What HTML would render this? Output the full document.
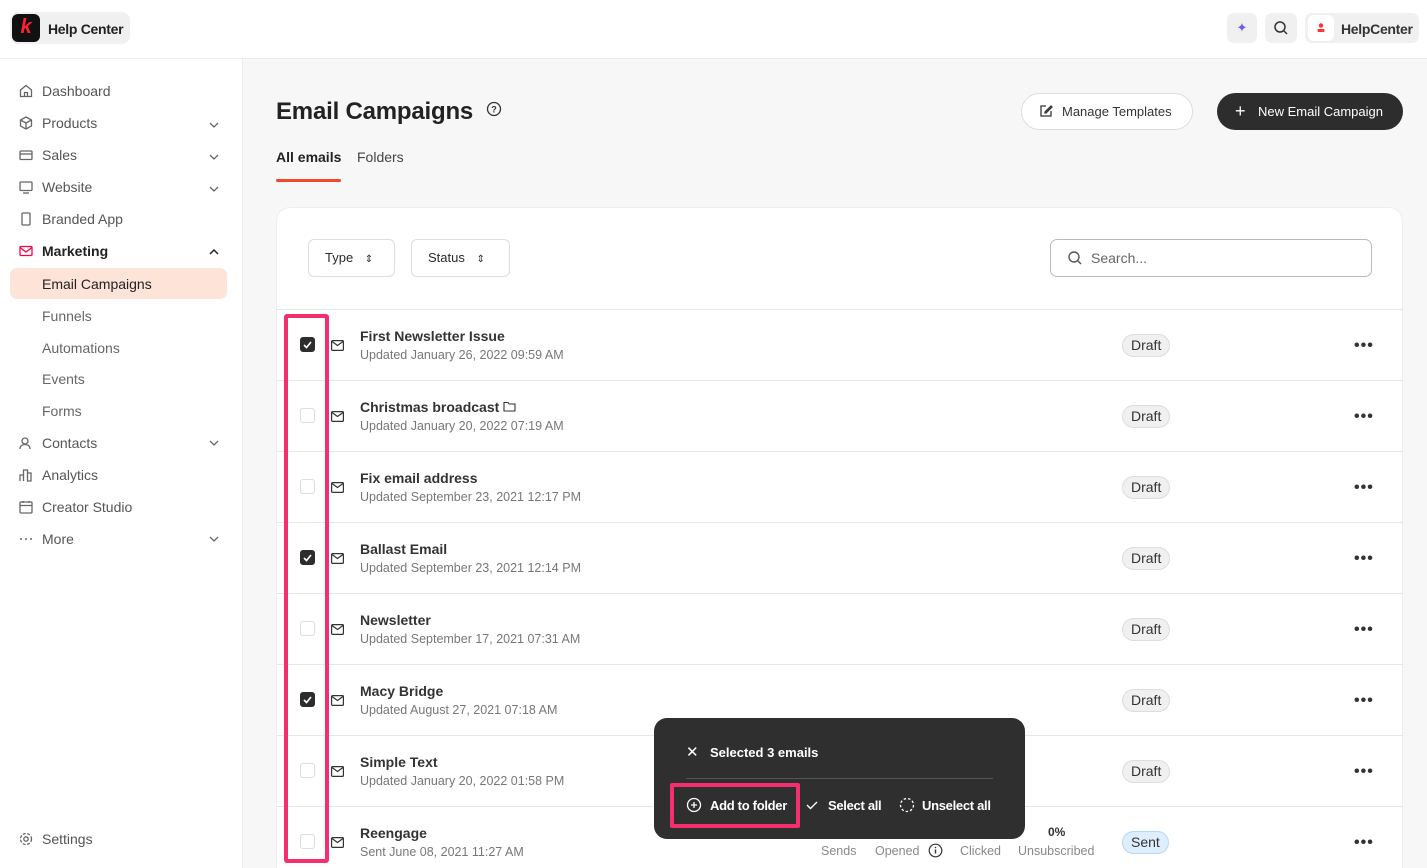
<!DOCTYPE html>
<html><head><meta charset="utf-8"><style>
*{box-sizing:border-box;margin:0;padding:0}
html{width:1427px;height:868px;overflow:hidden}
body{width:1427px;height:868px;overflow:hidden;font-family:"Liberation Sans",sans-serif;background:#f7f7f7;color:#2b2b2b;position:relative}
.top{position:absolute;left:0;top:0;width:1427px;height:59px;background:#fff;border-bottom:1px solid #ececec}
.side{position:absolute;left:0;top:59px;width:243px;height:809px;background:#fff;border-right:1px solid #ececec}
.nav{position:absolute;left:18px;font-size:14px;color:#555;display:flex;align-items:center;gap:8px}
.nav svg{width:16px;height:16px}
.chev{position:absolute;left:208px;width:12px;height:12px}
.sub{position:absolute;left:42px;font-size:14px;color:#666}
.abs{position:absolute}
.card{position:absolute;left:276px;top:207px;width:1127px;height:700px;background:#fff;border-radius:14px;border:1px solid #eee}
.row{position:absolute;left:276px;width:1127px;height:71px;border-top:1px solid #e6e6e6}
.t{position:absolute;left:84px;top:18px;font-size:14px;font-weight:bold;color:#333}
.d{position:absolute;left:84px;top:38px;font-size:12.5px;color:#777}
.cb{position:absolute;left:24px;top:27px;width:15px;height:15px;border:1px solid #ddd;border-radius:3px;background:#fff}
.cb.on{background:#2d2d2d;border-color:#2d2d2d}
.badge{position:absolute;left:846px;top:24px;height:23px;padding:0 8px;border:1px solid #ddd;border-radius:12px;background:#f0f0f0;font-size:14px;line-height:21px;color:#333}
.dots{position:absolute;left:1078px;top:27px;font-size:16px;font-weight:bold;letter-spacing:1px;color:#333}
.mail{position:absolute;left:55px;top:30px}
</style></head><body>
<div class="top">
 <div class="abs" style="left:10px;top:12px;width:120px;height:32px;background:#f0f0f0;border-radius:8px"></div>
 <div class="abs" style="left:12px;top:14px;width:28px;height:28px;background:#111;border-radius:6px;color:#f23;font-weight:bold;font-style:italic;font-size:20px;text-align:center;line-height:27px">k</div>
 <div class="abs" style="left:48px;top:21px;font-size:14px;font-weight:bold;color:#222;letter-spacing:-0.3px">Help Center</div>
 <div class="abs" style="left:1227px;top:13px;width:30px;height:30px;background:#f0f0f0;border-radius:7px;color:#6c5ce7;text-align:center;line-height:30px;font-size:13px">✦</div>
 <div class="abs" style="left:1265px;top:13px;width:32px;height:30px;background:#f0f0f0;border-radius:7px"><svg width="32" height="30"><circle cx="15" cy="14" r="5" fill="none" stroke="#333" stroke-width="1.5"/><path d="M19 18l3 3" stroke="#333" stroke-width="1.5"/></svg></div>
 <div class="abs" style="left:1305px;top:13px;width:114px;height:30px;background:#f0f0f0;border-radius:7px"></div>
 <div class="abs" style="left:1308px;top:15px;width:26px;height:26px;background:#fff;border-radius:6px"><svg width="26" height="26"><circle cx="13" cy="10.5" r="2.2" fill="#f33"/><rect x="9.5" y="14" width="7" height="3" rx="1" fill="#f33"/></svg></div>
 <div class="abs" style="left:1341px;top:21px;font-size:14px;font-weight:bold;color:#333;letter-spacing:-0.3px">HelpCenter</div>
</div>
<div class="side">
 <div class="nav" style="top:24px"><svg viewBox="0 0 16 16"><path d="M2.5 7L8 2.5 13.5 7v6.5h-11z M6.5 13.5v-4h3v4" fill="none" stroke="#666" stroke-width="1.3"/></svg>Dashboard</div>
 <div class="nav" style="top:56px"><svg viewBox="0 0 16 16"><path d="M8 2l5.5 3v6L8 14 2.5 11V5z M2.5 5L8 8l5.5-3 M8 8v6" fill="none" stroke="#666" stroke-width="1.3"/></svg>Products</div>
 <div class="nav" style="top:88px"><svg viewBox="0 0 16 16"><rect x="2" y="4" width="12" height="8.5" rx="1" fill="none" stroke="#666" stroke-width="1.3"/><path d="M2 7h12" stroke="#666" stroke-width="1.3"/></svg>Sales</div>
 <div class="nav" style="top:120px"><svg viewBox="0 0 16 16"><rect x="2" y="3" width="12" height="8.5" rx="1" fill="none" stroke="#666" stroke-width="1.3"/><path d="M5 14h6" stroke="#666" stroke-width="1.3"/></svg>Website</div>
 <div class="nav" style="top:152px"><svg viewBox="0 0 16 16"><rect x="4" y="2" width="8" height="12" rx="1" fill="none" stroke="#666" stroke-width="1.3"/></svg>Branded App</div>
 <div class="nav" style="top:184px;color:#222;font-weight:bold"><svg viewBox="0 0 16 16"><rect x="2" y="3.5" width="12" height="9" rx="1" fill="none" stroke="#f04" stroke-width="1.3"/><path d="M2 4.5l6 4.5 6-4.5" fill="none" stroke="#f04" stroke-width="1.3"/></svg>Marketing</div>
 <div class="abs" style="left:10px;top:209px;width:217px;height:31px;background:#fde3d8;border-radius:7px"></div>
 <div class="sub" style="top:217px;color:#222">Email Campaigns</div>
 <div class="sub" style="top:249px">Funnels</div>
 <div class="sub" style="top:281px">Automations</div>
 <div class="sub" style="top:312px">Events</div>
 <div class="sub" style="top:344px">Forms</div>
 <div class="nav" style="top:376px"><svg viewBox="0 0 16 16"><circle cx="7" cy="6" r="3" fill="none" stroke="#666" stroke-width="1.3"/><path d="M2 14c0-3 2-4.5 5-4.5s5 1.5 5 4.5" fill="none" stroke="#666" stroke-width="1.3"/></svg>Contacts</div>
 <div class="nav" style="top:408px"><svg viewBox="0 0 16 16"><path d="M2 14V8h3.5v6M5.5 14V3h4v11M9.5 14V6H13v8z" fill="none" stroke="#666" stroke-width="1.3"/></svg>Analytics</div>
 <div class="nav" style="top:440px"><svg viewBox="0 0 16 16"><rect x="2" y="3" width="12" height="11" rx="1" fill="none" stroke="#666" stroke-width="1.3"/><path d="M2 6.5h12M5 2v2M11 2v2" stroke="#666" stroke-width="1.3"/></svg>Creator Studio</div>
 <div class="nav" style="top:472px"><svg viewBox="0 0 16 16"><circle cx="3" cy="8" r="1" fill="#666"/><circle cx="8" cy="8" r="1" fill="#666"/><circle cx="13" cy="8" r="1" fill="#666"/></svg>More</div>
 <div class="nav" style="top:772px"><svg viewBox="0 0 16 16"><circle cx="8" cy="8" r="2.2" fill="none" stroke="#666" stroke-width="1.3"/><circle cx="8" cy="8" r="5.5" fill="none" stroke="#666" stroke-width="1.3" stroke-dasharray="3 1.5"/></svg>Settings</div>
 <svg class="chev" style="top:60px" viewBox="0 0 12 12"><path d="M2 4l4 4 4-4" fill="none" stroke="#666" stroke-width="1.3"/></svg>
 <svg class="chev" style="top:92px" viewBox="0 0 12 12"><path d="M2 4l4 4 4-4" fill="none" stroke="#666" stroke-width="1.3"/></svg>
 <svg class="chev" style="top:124px" viewBox="0 0 12 12"><path d="M2 4l4 4 4-4" fill="none" stroke="#666" stroke-width="1.3"/></svg>
 <svg class="chev" style="top:187px" viewBox="0 0 12 12"><path d="M2 8l4-4 4 4" fill="none" stroke="#222" stroke-width="1.5"/></svg>
 <svg class="chev" style="top:378px" viewBox="0 0 12 12"><path d="M2 4l4 4 4-4" fill="none" stroke="#666" stroke-width="1.3"/></svg>
 <svg class="chev" style="top:474px" viewBox="0 0 12 12"><path d="M2 4l4 4 4-4" fill="none" stroke="#666" stroke-width="1.3"/></svg>
</div>

<div class="abs" style="left:276px;top:98px;font-size:24px;font-weight:bold;color:#222;letter-spacing:-0.2px">Email Campaigns</div>
<svg class="abs" style="left:486px;top:101px" width="16" height="16"><circle cx="8" cy="8" r="6.5" fill="none" stroke="#333" stroke-width="1.3"/><text x="8" y="11.5" font-size="9" text-anchor="middle" fill="#333" font-family="Liberation Sans" font-weight="bold">?</text></svg>
<div class="abs" style="left:276px;top:149px;font-size:14px;font-weight:bold;color:#222">All emails</div>
<div class="abs" style="left:357px;top:149px;font-size:14px;color:#444">Folders</div>
<div class="abs" style="left:276px;top:179px;width:65px;height:3px;background:#f04a2a;border-radius:2px"></div>
<div class="abs" style="left:1021px;top:93px;width:172px;height:37px;background:#fff;border:1px solid #ddd;border-radius:19px;font-size:13px;color:#333;line-height:35px;padding-left:40px">Manage Templates</div>
<svg class="abs" style="left:1038px;top:103px" width="16" height="16"><path d="M8 3H3v10h10V8 M7 9l6-6 1 1-6 6H7z" fill="none" stroke="#333" stroke-width="1.3"/></svg>
<div class="abs" style="left:1217px;top:93px;width:186px;height:37px;background:#2d2d2d;border-radius:19px;font-size:13px;color:#fff;line-height:37px;padding-left:41px">New Email Campaign</div>
<div class="abs" style="left:1235px;top:101px;color:#fff;font-size:18px">+</div>

<div class="card"></div>
<div class="abs" style="left:308px;top:239px;width:87px;height:38px;border:1px solid #ddd;border-radius:6px;background:#fff;font-size:13px;line-height:36px;padding-left:16px">Type <span style="margin-left:8px;font-size:10px">⇕</span></div>
<div class="abs" style="left:411px;top:239px;width:99px;height:38px;border:1px solid #ddd;border-radius:6px;background:#fff;font-size:13px;line-height:36px;padding-left:16px">Status <span style="margin-left:8px;font-size:10px">⇕</span></div>
<div class="abs" style="left:1050px;top:239px;width:322px;height:38px;border:1px solid #bbb;border-radius:7px;background:#fff;font-size:14px;color:#666;line-height:36px;padding-left:40px">Search...</div>
<svg class="abs" style="left:1067px;top:250px" width="16" height="16"><circle cx="7" cy="7" r="5" fill="none" stroke="#555" stroke-width="1.4"/><path d="M11 11l3 3" stroke="#555" stroke-width="1.4"/></svg>

<div class="row" style="top:309px"><div class="cb on"><svg width="13" height="13"><path d="M3 7l2.5 2.5L10 4" fill="none" stroke="#fff" stroke-width="1.6"/></svg></div><svg class="mail" width="13" height="11"><rect x=".6" y=".6" width="11.8" height="9.8" rx="1" fill="none" stroke="#333" stroke-width="1.2"/><path d="M1 1.5l5.5 4 5.5-4" fill="none" stroke="#333" stroke-width="1.2"/></svg><div class="t">First Newsletter Issue</div><div class="d">Updated January 26, 2022 09:59 AM</div><div class="badge">Draft</div><div class="dots">•••</div></div>
<div class="row" style="top:380px"><div class="cb"></div><svg class="mail" width="13" height="11"><rect x=".6" y=".6" width="11.8" height="9.8" rx="1" fill="none" stroke="#333" stroke-width="1.2"/><path d="M1 1.5l5.5 4 5.5-4" fill="none" stroke="#333" stroke-width="1.2"/></svg><div class="t">Christmas broadcast <svg width="13" height="11" style="vertical-align:0"><path d="M1 1.5h4l1.2 1.5H12v7H1z" fill="none" stroke="#333" stroke-width="1.1"/></svg></div><div class="d">Updated January 20, 2022 07:19 AM</div><div class="badge">Draft</div><div class="dots">•••</div></div>
<div class="row" style="top:451px"><div class="cb"></div><svg class="mail" width="13" height="11"><rect x=".6" y=".6" width="11.8" height="9.8" rx="1" fill="none" stroke="#333" stroke-width="1.2"/><path d="M1 1.5l5.5 4 5.5-4" fill="none" stroke="#333" stroke-width="1.2"/></svg><div class="t">Fix email address</div><div class="d">Updated September 23, 2021 12:17 PM</div><div class="badge">Draft</div><div class="dots">•••</div></div>
<div class="row" style="top:522px"><div class="cb on"><svg width="13" height="13"><path d="M3 7l2.5 2.5L10 4" fill="none" stroke="#fff" stroke-width="1.6"/></svg></div><svg class="mail" width="13" height="11"><rect x=".6" y=".6" width="11.8" height="9.8" rx="1" fill="none" stroke="#333" stroke-width="1.2"/><path d="M1 1.5l5.5 4 5.5-4" fill="none" stroke="#333" stroke-width="1.2"/></svg><div class="t">Ballast Email</div><div class="d">Updated September 23, 2021 12:14 PM</div><div class="badge">Draft</div><div class="dots">•••</div></div>
<div class="row" style="top:593px"><div class="cb"></div><svg class="mail" width="13" height="11"><rect x=".6" y=".6" width="11.8" height="9.8" rx="1" fill="none" stroke="#333" stroke-width="1.2"/><path d="M1 1.5l5.5 4 5.5-4" fill="none" stroke="#333" stroke-width="1.2"/></svg><div class="t">Newsletter</div><div class="d">Updated September 17, 2021 07:31 AM</div><div class="badge">Draft</div><div class="dots">•••</div></div>
<div class="row" style="top:664px"><div class="cb on"><svg width="13" height="13"><path d="M3 7l2.5 2.5L10 4" fill="none" stroke="#fff" stroke-width="1.6"/></svg></div><svg class="mail" width="13" height="11"><rect x=".6" y=".6" width="11.8" height="9.8" rx="1" fill="none" stroke="#333" stroke-width="1.2"/><path d="M1 1.5l5.5 4 5.5-4" fill="none" stroke="#333" stroke-width="1.2"/></svg><div class="t">Macy Bridge</div><div class="d">Updated August 27, 2021 07:18 AM</div><div class="badge">Draft</div><div class="dots">•••</div></div>
<div class="row" style="top:735px"><div class="cb"></div><svg class="mail" width="13" height="11"><rect x=".6" y=".6" width="11.8" height="9.8" rx="1" fill="none" stroke="#333" stroke-width="1.2"/><path d="M1 1.5l5.5 4 5.5-4" fill="none" stroke="#333" stroke-width="1.2"/></svg><div class="t">Simple Text</div><div class="d">Updated January 20, 2022 01:58 PM</div><div class="badge">Draft</div><div class="dots">•••</div></div>
<div class="row" style="top:806px;height:62px"><div class="cb"></div><svg class="mail" width="13" height="11"><rect x=".6" y=".6" width="11.8" height="9.8" rx="1" fill="none" stroke="#333" stroke-width="1.2"/><path d="M1 1.5l5.5 4 5.5-4" fill="none" stroke="#333" stroke-width="1.2"/></svg><div class="t">Reengage</div><div class="d">Sent June 08, 2021 11:27 AM</div>
 <div class="abs" style="left:772px;top:18px;font-size:12px;font-weight:bold;color:#333">0%</div>
 <div class="abs" style="left:545px;top:37px;font-size:12.5px;color:#888">Sends</div>
 <div class="abs" style="left:599px;top:37px;font-size:12.5px;color:#888">Opened</div>
 <svg class="abs" style="left:652px;top:36px" width="15" height="15"><circle cx="7.5" cy="7.5" r="6.3" fill="none" stroke="#333" stroke-width="1.2"/><path d="M7.5 6.5v4" stroke="#333" stroke-width="1.4"/><circle cx="7.5" cy="4.5" r=".8" fill="#333"/></svg>
 <div class="abs" style="left:684px;top:37px;font-size:12.5px;color:#888">Clicked</div>
 <div class="abs" style="left:742px;top:37px;font-size:12.5px;color:#888">Unsubscribed</div>
 <div class="badge" style="background:#ddeeff;border-color:#b8d6f5">Sent</div><div class="dots">•••</div></div>

<div class="abs" style="left:284px;top:314px;width:45px;height:549px;border:4px solid #f72e6d;border-radius:3px"></div>

<div class="abs" style="left:654px;top:718px;width:371px;height:121px;background:#2f2f2f;border-radius:13px"></div>
<div class="abs" style="left:686px;top:743px;color:#fff;font-size:15px">✕</div>
<div class="abs" style="left:710px;top:745px;color:#fff;font-size:13px;font-weight:bold">Selected 3 emails</div>
<div class="abs" style="left:686px;top:778px;width:307px;height:1px;background:#555"></div>
<div class="abs" style="left:670px;top:783px;width:130px;height:45px;border:4px solid #f72e6d;border-radius:2px"></div>
<svg class="abs" style="left:686px;top:797px" width="16" height="16"><circle cx="8" cy="8" r="6.5" fill="none" stroke="#fff" stroke-width="1.3"/><path d="M8 5v6M5 8h6" stroke="#fff" stroke-width="1.3"/></svg>
<div class="abs" style="left:710px;top:798px;color:#fff;font-size:13px;font-weight:bold;letter-spacing:-0.3px">Add to folder</div>
<svg class="abs" style="left:805px;top:798px" width="14" height="14"><path d="M2 7l3.5 3.5L12 4" fill="none" stroke="#fff" stroke-width="1.4"/></svg>
<div class="abs" style="left:828px;top:798px;color:#fff;font-size:13px;font-weight:bold;letter-spacing:-0.3px">Select all</div>
<svg class="abs" style="left:899px;top:797px" width="16" height="16"><circle cx="8" cy="8" r="6.5" fill="none" stroke="#fff" stroke-width="1.3" stroke-dasharray="2.5 2"/></svg>
<div class="abs" style="left:922px;top:798px;color:#fff;font-size:13px;font-weight:bold;letter-spacing:-0.3px">Unselect all</div>
</body></html>
